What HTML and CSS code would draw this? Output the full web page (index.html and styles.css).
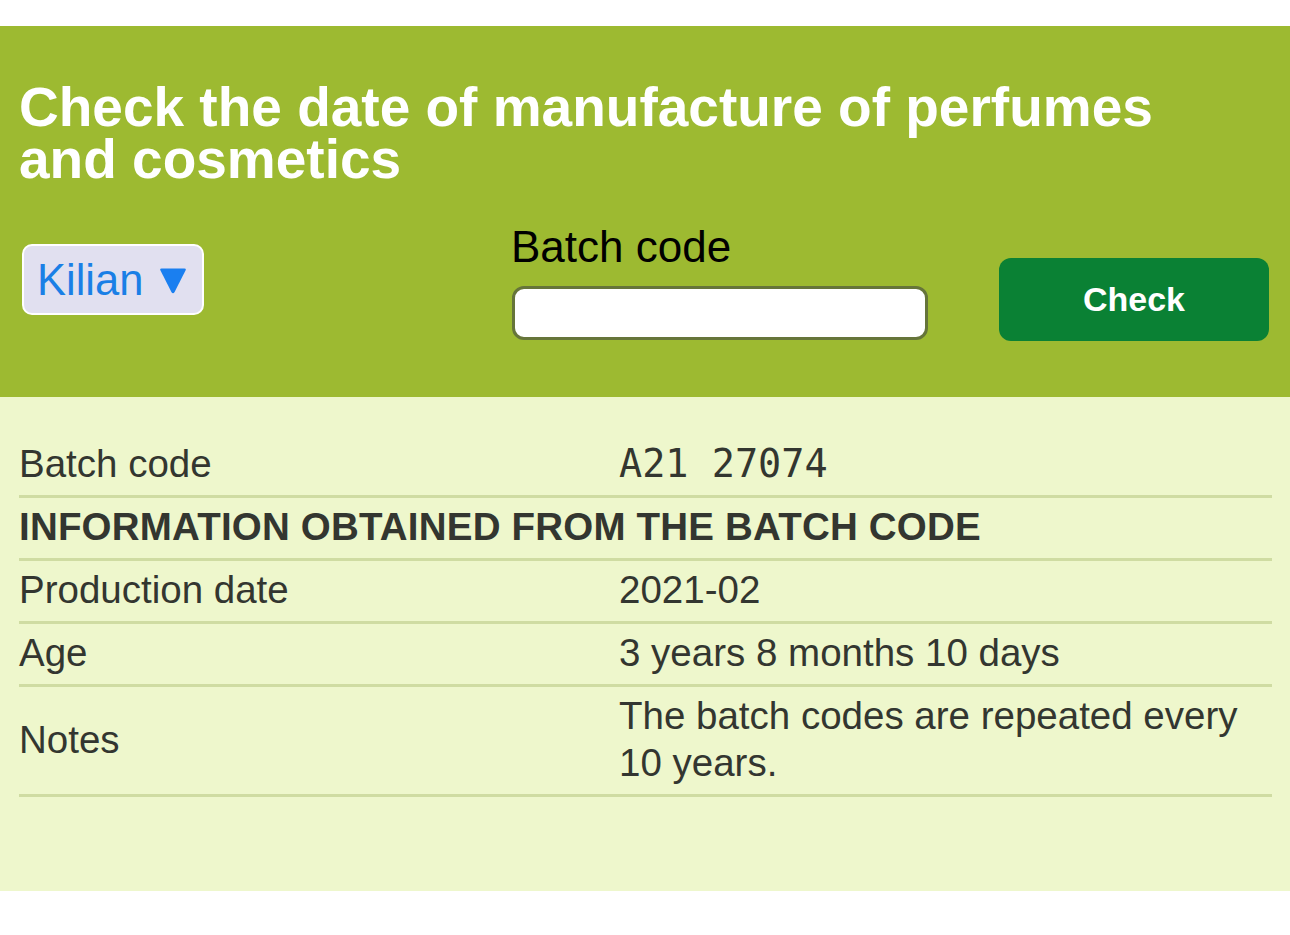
FILE: index.html
```html
<!DOCTYPE html>
<html lang="en">
<head>
<meta charset="utf-8">
<title>Check the date of manufacture</title>
<link rel="stylesheet" href="styles.css">
</head>
<body>
<div class="page">
  <header class="hero">
    <h1 class="title">Check the date of manufacture of perfumes and cosmetics</h1>
    <form class="controls">
      <div class="brand-col">
        <div class="brand-select">
          <span class="brand-name">Kilian</span>
          <svg class="brand-arrow" width="28" height="27" viewBox="0 0 28 27" aria-hidden="true">
            <path d="M2.5 1.5 H25.5 Q27.5 1.5 26.5 3.5 L15.6 25 Q14 27.5 12.4 25 L1.5 3.5 Q0.5 1.5 2.5 1.5 Z" fill="#1a7ff0"/>
          </svg>
        </div>
      </div>
      <div class="code-col">
        <label class="code-label" for="code">Batch code</label>
        <input class="code-input" id="code" type="text">
      </div>
      <div class="btn-col">
        <button class="check-btn" type="button">Check</button>
      </div>
    </form>
  </header>
  <section class="results">
    <table class="info">
      <tbody>
        <tr>
          <td class="key">Batch code</td>
          <td class="val mono">A21 27074</td>
        </tr>
        <tr>
          <th colspan="2" class="section-head">INFORMATION OBTAINED FROM THE BATCH CODE</th>
        </tr>
        <tr>
          <td class="key">Production date</td>
          <td class="val">2021-02</td>
        </tr>
        <tr>
          <td class="key">Age</td>
          <td class="val">3 years 8 months 10 days</td>
        </tr>
        <tr>
          <td class="key">Notes</td>
          <td class="val">The batch codes are repeated every 10 years.</td>
        </tr>
      </tbody>
    </table>
  </section>
</div>
</body>
</html>
```

FILE: styles.css
```css
html, body {
  margin: 0;
  padding: 0;
  background: #ffffff;
}

body {
  font-family: "Liberation Sans", Arial, sans-serif;
}

.page {
  padding-top: 26px;
}

.hero {
  background: #9dba31;
  padding: 55px 21px 56px 19px;
}

.title {
  margin: 0;
  max-width: 1180px;
  color: #ffffff;
  font-size: 55px;
  line-height: 52px;
  font-weight: 700;
}

.controls {
  display: grid;
  grid-template-columns: 492px 488px 270px;
  margin: 38px 0 0 0;
}

.brand-col {
  padding: 21px 0 0 3px;
}

.brand-select {
  box-sizing: border-box;
  width: 182px;
  height: 71px;
  border: 2px solid #ffffff;
  border-radius: 10px;
  background: #e1e0f0;
  display: flex;
  align-items: center;
  padding-left: 13px;
  gap: 16px;
}

.brand-name {
  color: #1a7fe6;
  font-size: 43.5px;
  line-height: 48px;
}

.brand-arrow {
  display: block;
  margin-top: 2px;
}

.code-col {
  display: flex;
  flex-direction: column;
}

.code-label {
  color: #000000;
  font-size: 44px;
  line-height: 48px;
}

.code-input {
  box-sizing: border-box;
  margin: 15px 0 0 1px;
  width: 416px;
  height: 54px;
  border: 3px solid #66753a;
  border-radius: 12px;
  background: #ffffff;
  outline: none;
  padding: 0 10px;
  font-size: 30px;
}

.btn-col {
  padding-top: 35px;
}

.check-btn {
  display: block;
  box-sizing: border-box;
  width: 270px;
  height: 83px;
  border: none;
  border-radius: 12px;
  background: #0a8134;
  color: #ffffff;
  font-family: "Liberation Sans", Arial, sans-serif;
  font-weight: 700;
  font-size: 34px;
  padding: 0;
}

.results {
  background: #eef7cc;
  padding: 38px 18px 94px 19px;
}

.info {
  width: 100%;
  border-collapse: collapse;
  color: #333630;
  font-size: 38.5px;
  line-height: 47px;
}

.info td,
.info th {
  padding: 5px 0 8px 0;
  border-bottom: 3px solid #cfdca2;
  vertical-align: middle;
  text-align: left;
}

.key {
  width: 600px;
}

.mono {
  font-family: "DejaVu Sans Mono", "Liberation Mono", monospace;
}

.section-head {
  font-weight: 700;
  letter-spacing: 0.2px;
}
```
